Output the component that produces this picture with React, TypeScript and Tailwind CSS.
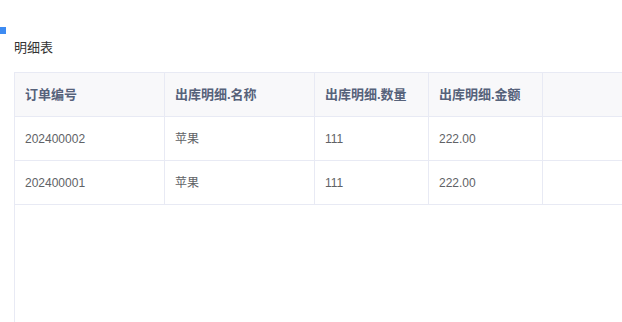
const columns = [
  { title: '订单编号', width: 'w-[150px]' },
  { title: '出库明细.名称', width: 'w-[150px]' },
  { title: '出库明细.数量', width: 'w-[114px]' },
  { title: '出库明细.金额', width: 'w-[114px]' },
];

const rows = [
  ['202400002', '苹果', '111', '222.00'],
  ['202400001', '苹果', '111', '222.00'],
];

export default function App() {
  return (
    <div className="relative h-[322px] w-[622px] overflow-hidden bg-white font-['Liberation_Sans','Noto_Sans_CJK_SC',sans-serif]">
      <div className="absolute left-0 top-[27px] h-[7px] w-[6px] bg-[#3d8bf2]" />
      <div className="pl-[14px] pt-[38px]">
        <div className="h-[34px] text-[13px] leading-[20px] text-[#333]">明细表</div>
        <div className="h-[250px] border-l border-[#e8eaf4]">
          <div className="flex h-[45px] border-y border-[#e8eaf4] bg-[#f8f8fa]">
            {columns.map((c) => (
              <div
                key={c.title}
                className={`${c.width} shrink-0 border-r border-[#e8eaf4] pl-[10px] text-[13px] font-bold leading-[43px] text-[#56627a]`}
              >
                {c.title}
              </div>
            ))}
            <div className="flex-1" />
          </div>
          {rows.map((r, i) => (
            <div key={i} className="flex h-[44px] border-b border-[#e8eaf4]">
              {r.map((cell, j) => (
                <div
                  key={j}
                  className={`${columns[j].width} shrink-0 border-r border-[#e8eaf4] pl-[10px] text-[12px] leading-[44px] text-[#606266]`}
                >
                  {cell}
                </div>
              ))}
              <div className="flex-1" />
            </div>
          ))}
        </div>
      </div>
    </div>
  );
}
